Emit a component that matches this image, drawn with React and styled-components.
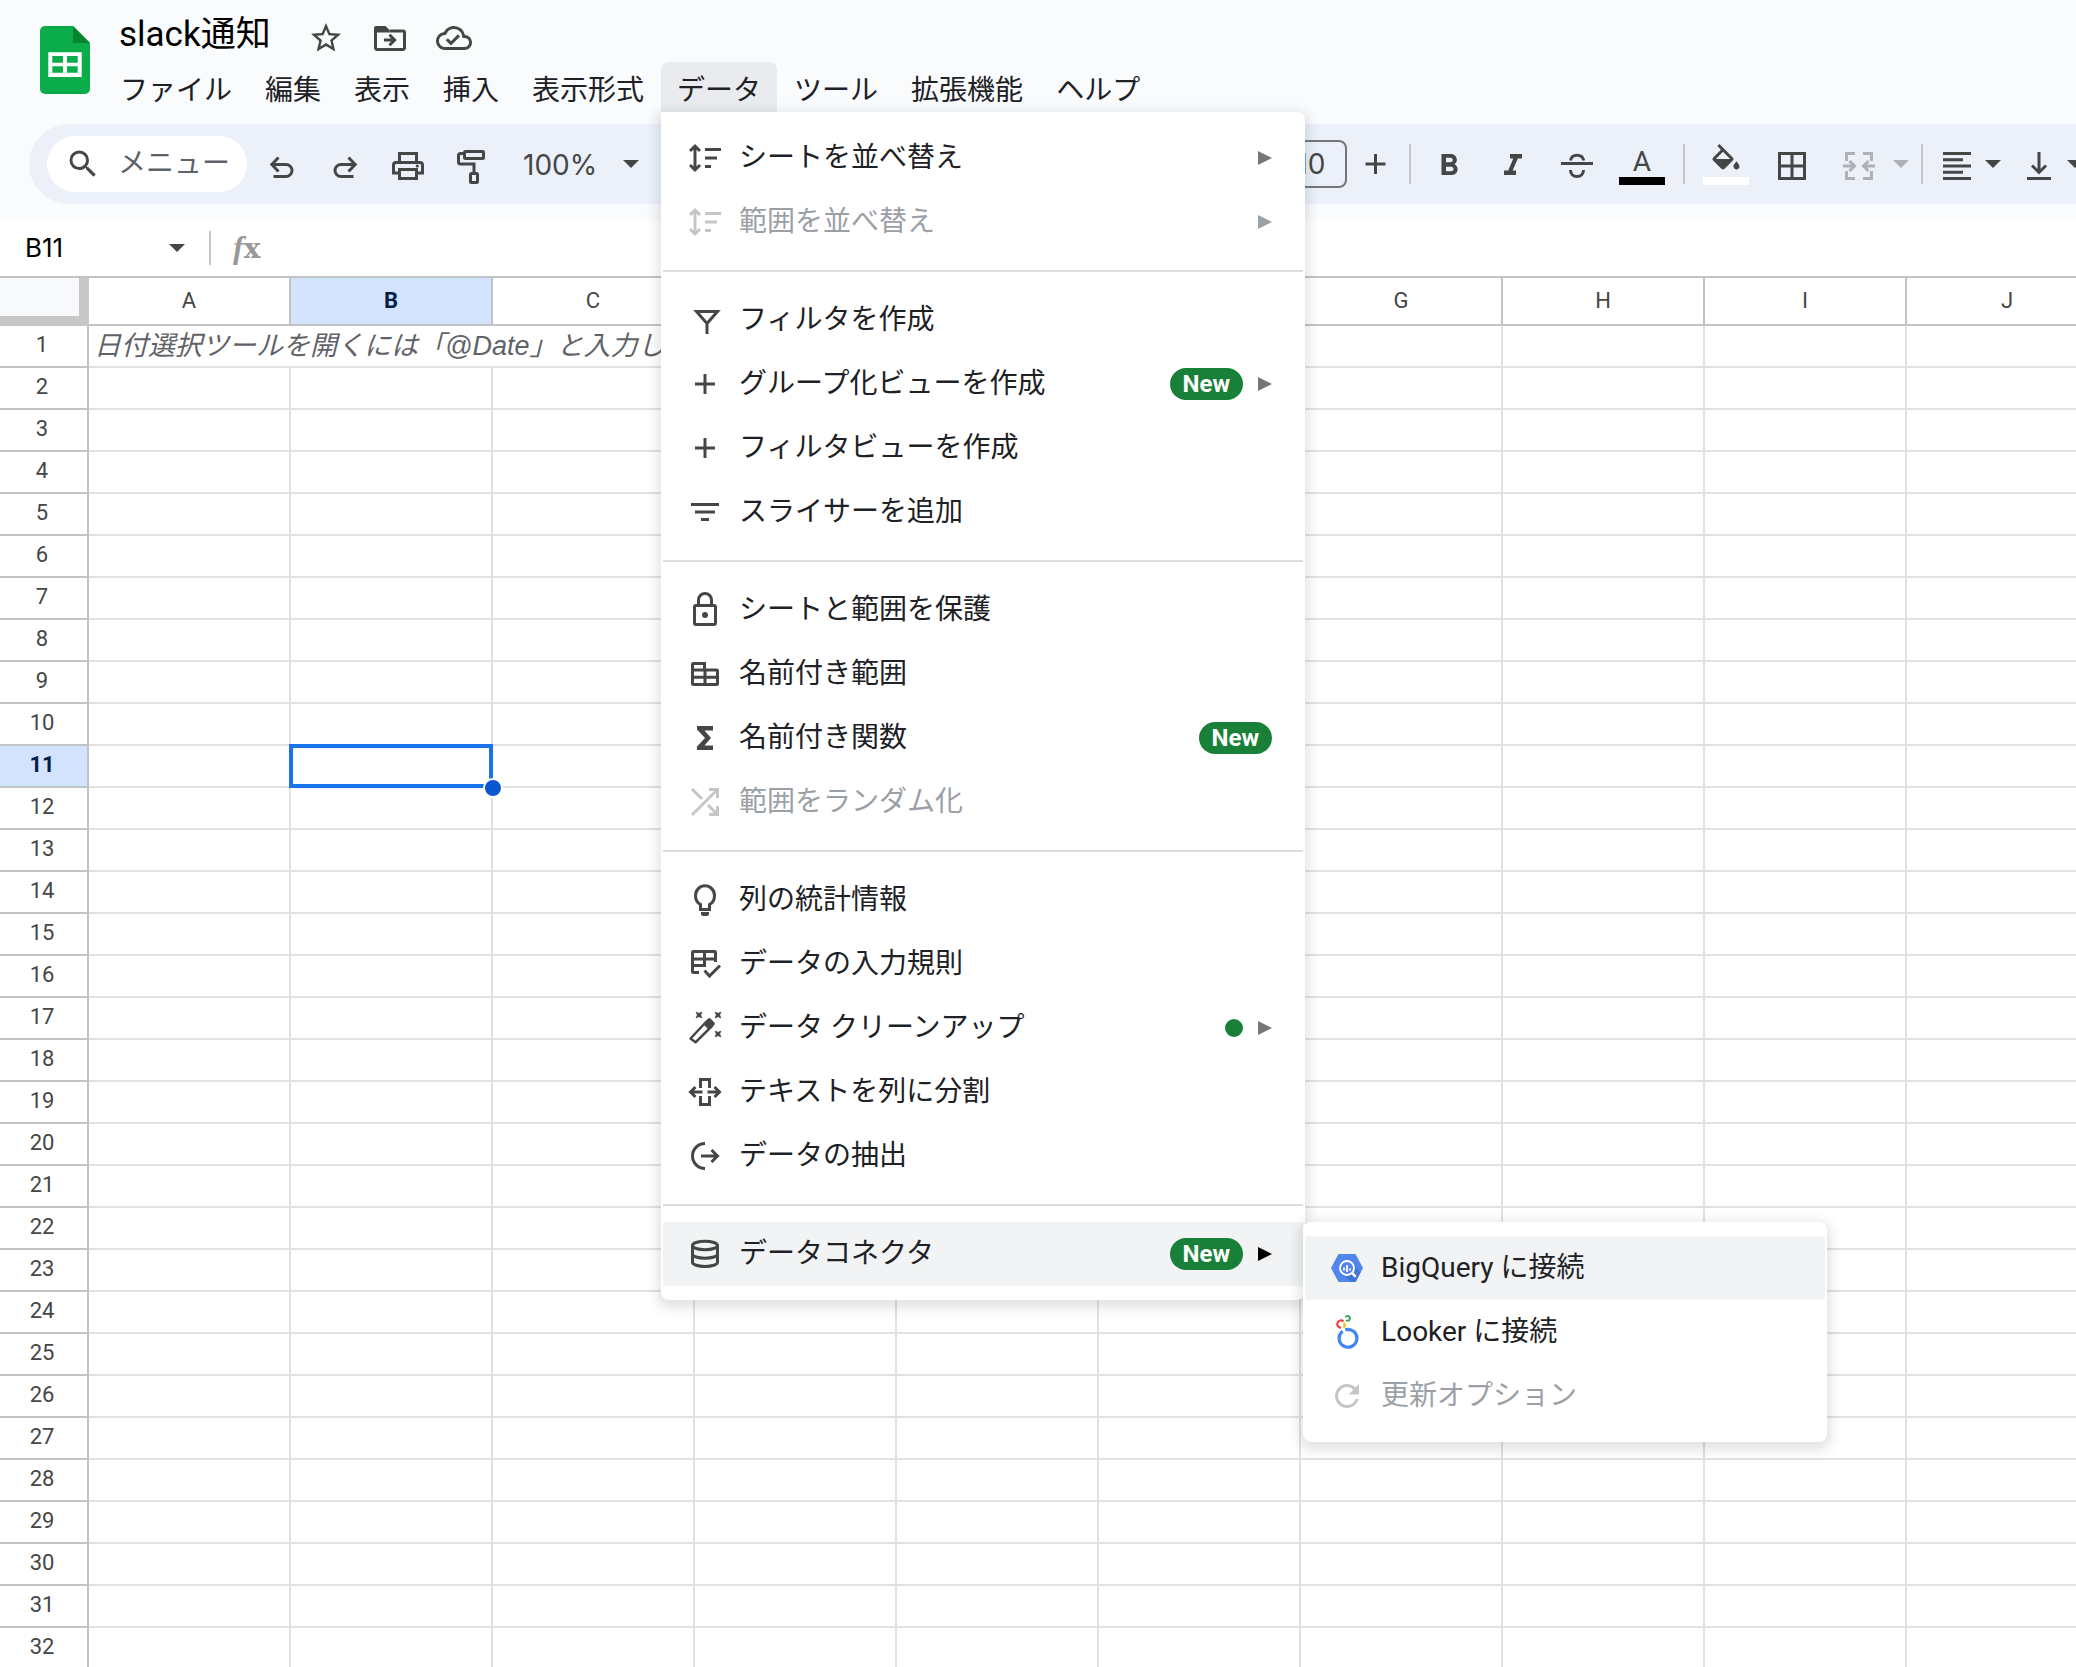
import React from 'react';
import styled, { createGlobalStyle, css } from 'styled-components';
import {
  MdStarBorder,
  MdOutlineCloudDone,
  MdSearch,
  MdFormatBold,
  MdFormatItalic,
  MdRefresh
} from 'react-icons/md';

const colors = {
  text: '#202124',
  icon: '#444746',
  muted: '#5f6368',
  disabled: '#9aa0a6',
  disabledIcon: '#c4c7c5',
  header: '#f9fbfd',
  toolbar: '#ecf1f9',
  hover: '#f1f3f4',
  headerLine: '#c0c4c4',
  gridLine: '#e1e1e1',
  selectedHeader: '#d3e3fd',
  selection: '#1a73e8',
  badge: '#188038'
};

const GlobalStyle = createGlobalStyle`
  * {
    box-sizing: border-box;
  }

  body {
    margin: 0;
    background-color: #fff;
    color: ${colors.text};
    font-family: Roboto, "Noto Sans CJK JP", sans-serif;
  }

  button, input, select {
    margin: 0;
    padding: 0;
    border: none;
    background: none;
    color: inherit;
    font: inherit;
  }
`;

const Page = styled.div`
  display: flex;
  flex-direction: column;
  height: 100vh;
  overflow: hidden;
`;

const Header = styled.header`
  flex: none;
  padding-bottom: 16px;
  background-color: ${colors.header};
`;

const Branding = styled.div`
  display: flex;
  padding-left: 40px;
  margin-bottom: 12px;
`;

const LogoLink = styled.a`
  display: block;
  flex: none;
  width: 50px;
  height: 68px;
  margin: 26px 14px 0 0;
`;

const TitleRow = styled.div`
  display: flex;
  align-items: center;
  gap: 16px;
  height: 62px;
  padding: 14px 0 0 15px;
`;

const Title = styled.h1`
  margin: 0 15px 6px 0;
  color: #000;
  font-size: 35px;
  font-weight: 400;
  line-height: 40px;
`;

const IconButton = styled.button`
  display: flex;
  align-items: center;
  justify-content: center;
  width: 48px;
  height: 48px;
  color: ${colors.icon};
  cursor: pointer;
`;

const MenuBar = styled.nav`
  display: flex;
  gap: 1px;
`;

const MenuBarItem = styled.div`
  position: relative;
`;

const MenuBarButton = styled.button`
  height: 50px;
  padding: 8px 16px 0;
  border-radius: 8px 8px 0 0;
  background-color: ${props => (props.$open ? '#e9ebee' : 'transparent')};
  font-size: 28px;
  line-height: 40px;
  white-space: nowrap;
  cursor: pointer;
`;

const panel = css`
  position: absolute;
  margin: 0;
  padding: 14px 2px;
  list-style: none;
  background-color: #fff;
  box-shadow: 0 4px 12px 4px rgba(60, 64, 67, 0.15);
`;

const Menu = styled.ul`
  ${panel}
  top: 100%;
  left: 0;
  z-index: 10;
  width: 644px;
  border-radius: 0 8px 8px 8px;
`;

const SubMenu = styled.ul`
  ${panel}
  top: 0;
  left: 100%;
  width: 524px;
  border-radius: 8px;
`;

const MenuEntry = styled.li`
  position: relative;
`;

const MenuDivider = styled.li`
  height: 2px;
  margin: 16px 0;
  background-color: #dadce0;
`;

const MenuButton = styled.button`
  display: flex;
  align-items: center;
  width: 100%;
  height: 64px;
  padding: 0 31px 0 24px;
  background-color: ${props => (props.$active ? colors.hover : 'transparent')};
  color: ${props => (props.disabled ? colors.disabled : colors.text)};
  font-size: 28px;
  text-align: left;
  cursor: pointer;

  svg {
    flex: none;
    color: ${props => (props.disabled ? colors.disabledIcon : colors.icon)};
  }
`;

const MenuLabel = styled.span`
  flex: 1;
  padding-left: 16px;
  line-height: 40px;
  white-space: nowrap;
`;

const Badge = styled.span`
  height: 32px;
  padding: 0 13px;
  border-radius: 16px;
  background-color: ${colors.badge};
  color: #fff;
  font-size: 24px;
  font-weight: 700;
  line-height: 32px;
`;

const Dot = styled.span`
  width: 18px;
  height: 18px;
  border-radius: 50%;
  background-color: ${colors.badge};
`;

const SubmenuArrow = styled.span`
  margin-left: 15px;
  border-style: solid;
  border-width: 7px 0 7px 14px;
  border-color: transparent transparent transparent ${props => props.$color};
`;

const Toolbar = styled.div`
  display: flex;
  align-items: center;
  height: 80px;
  margin-left: 29px;
  padding-left: 18px;
  overflow: hidden;
  border-radius: 40px 0 0 40px;
  background-color: ${colors.toolbar};
  color: ${colors.icon};
`;

const ToolGroup = styled.div`
  display: flex;
  flex: none;
  align-items: center;
  gap: 3px;
  min-width: 1228px;
`;

const SearchBox = styled.label`
  display: flex;
  align-items: center;
  gap: 17px;
  width: 200px;
  height: 56px;
  margin-right: 2px;
  padding-left: 18px;
  border-radius: 28px;
  background-color: #fff;

  svg {
    flex: none;
  }
`;

const SearchInput = styled.input`
  width: 116px;
  height: 40px;
  padding-bottom: 2px;
  outline: none;
  font-size: 28px;

  &::placeholder {
    color: ${colors.muted};
    opacity: 1;
  }
`;

const ToolButton = styled.button`
  display: flex;
  flex: none;
  align-items: center;
  justify-content: center;
  width: ${props => props.$width || 60}px;
  height: 48px;
  padding-top: 4px;
  color: ${props => (props.disabled ? '#adb1b6' : 'inherit')};
  cursor: pointer;
`;

const ColorButton = styled(ToolButton)`
  flex-direction: column;
  gap: 3px;
  padding-top: 0;
`;

const ColorGlyph = styled.span`
  display: block;
  height: 30px;
  font-size: 28px;
  line-height: 36px;
`;

const ColorBar = styled.span`
  flex: none;
  width: 46px;
  height: 8px;
  background-color: ${props => props.$color};
`;

const ToolDivider = styled.span`
  flex: none;
  width: 2px;
  height: 40px;
  margin: 0 ${props => props.$space}px;
  background-color: #c7c7c7;
`;

const Caret = styled.span`
  flex: none;
  width: 16px;
  border-style: solid;
  border-width: 8px 8px 0 8px;
  border-color: ${props => props.$color || colors.icon} transparent transparent transparent;
`;

const SplitTool = styled.div`
  display: flex;
  flex: none;
  align-items: center;
  gap: 6px;
  margin-right: ${props => props.$end || 0}px;
  margin-left: ${props => props.$start || 0}px;
`;

const ZoomField = styled.div`
  display: flex;
  align-items: center;
  margin-left: 19px;
`;

const ZoomSelect = styled.select`
  width: 100px;
  height: 48px;
  padding-top: 2px;
  appearance: none;
  font-family: Inter, sans-serif;
  font-size: 28px;
`;

const SizeInput = styled.input`
  flex: none;
  width: 72px;
  height: 48px;
  border: 2px solid #747775;
  border-radius: 8px;
  font-family: Inter, sans-serif;
  font-size: 28px;
  text-align: center;
`;

const FormulaBar = styled.div`
  display: flex;
  flex: none;
  align-items: center;
  height: 56px;
  padding: 0 25px;
`;

const NameBox = styled.input`
  width: 144px;
  height: 40px;
  padding-bottom: 2px;
  outline: none;
  color: #000;
  font-family: Inter, sans-serif;
  font-size: 26px;
`;

const FormulaDivider = styled.span`
  width: 2px;
  height: 34px;
  margin: 0 22px 0 24px;
  background-color: #c7c7c7;
`;

const FormulaLabel = styled.label`
  color: #999;
  font-family: "DejaVu Serif", serif;
  font-size: 28px;
  font-weight: 700;
  line-height: 40px;

  i {
    font-family: "Liberation Serif", serif;
    font-size: 32px;
  }
`;

const FormulaInput = styled.input`
  flex: 1;
  height: 40px;
  margin-left: 20px;
  outline: none;
  font-size: 26px;
`;

const SheetArea = styled.main`
  flex: 1;
  min-height: 0;
  overflow: hidden;
  border-top: 2px solid ${colors.headerLine};
`;

const Sheet = styled.table`
  width: 2109px;
  table-layout: fixed;
  border-collapse: separate;
  border-spacing: 0;
`;

const Corner = styled.td`
  width: 89px;
  height: 48px;
  padding: 0;
  border: solid #c7c7c7;
  border-width: 0 10px 10px 0;
  background-color: #f8f9fa;
`;

const headerCell = css`
  padding: 0;
  border: solid ${colors.headerLine};
  border-width: 0 2px 2px 0;
  background-color: ${props => (props.$selected ? colors.selectedHeader : '#fff')};
  color: ${props => (props.$selected ? '#041e49' : colors.icon)};
  font-size: 22px;
  font-weight: ${props => (props.$selected ? 700 : 400)};
  line-height: 38px;
`;

const ColumnHeader = styled.th`
  ${headerCell}
  width: 202px;
  height: 48px;
`;

const RowHeader = styled.th`
  ${headerCell}
  height: 42px;
  padding: 0 3px 2px 0;
`;

const Cell = styled.td`
  position: relative;
  height: 42px;
  padding: 0;
  border: solid ${colors.gridLine};
  border-width: 0 2px 2px 0;
`;

const HintCell = styled(Cell)`
  overflow: hidden;
  padding-left: 5px;
  color: ${colors.muted};
  font-family: "Liberation Sans", "Noto Sans CJK JP", sans-serif;
  font-size: 27px;
  font-style: italic;
  line-height: 40px;
  white-space: nowrap;
`;

const Selection = styled.div`
  position: absolute;
  inset: -2px;
  z-index: 1;
  border: 4px solid ${colors.selection};
`;

const FillHandle = styled.span`
  position: absolute;
  right: -14px;
  bottom: -14px;
  width: 20px;
  height: 20px;
  border: 2px solid #fff;
  border-radius: 50%;
  background-color: #0b57d0;
`;

const Glyph = ({ children, width = 3 }) => (
  <svg
    width="36"
    height="36"
    viewBox="0 0 36 36"
    fill="none"
    stroke="currentColor"
    strokeWidth={width}
    overflow="visible"
    aria-hidden="true"
  >
    {children}
  </svg>
);

const SheetsLogo = () => (
  <svg width="50" height="68" viewBox="0 0 50 68" aria-hidden="true">
    <path d="M5 0H33L50 17V63a5 5 0 0 1-5 5H5a5 5 0 0 1-5-5V5a5 5 0 0 1 5-5z" fill="#0aad4a" />
    <path d="M33 0L50 17H33z" fill="#05842f" />
    <path
      d="M8.3 26.3H41.7V51H8.3zM12.3 30V36.7H23V30zM27 30V36.7H37.7V30zM12.3 40.3V46.7H23V40.3zM27 40.3V46.7H37.7V40.3z"
      fill="#fff"
      fillRule="evenodd"
    />
  </svg>
);

const FolderMoveIcon = () => (
  <Glyph>
    <path d="M3.5 8V28a1.5 1.5 0 0 0 1.5 1.5H31a1.5 1.5 0 0 0 1.5-1.5V12.5a1.5 1.5 0 0 0-1.5-1.5H17.5" />
    <path d="M4 6H13.5L17.5 10V12.5H2V8a2 2 0 0 1 2-2z" fill="currentColor" stroke="none" />
    <path d="M12 20H22M17.5 14.8L22.7 20L17.5 25.2" />
  </Glyph>
);

const UndoIcon = () => (
  <Glyph>
    <path d="M9.5 28.5H22a6 6 0 0 0 0-12H8M14.5 9.5L7.8 16.5L14.5 23.5" />
  </Glyph>
);

const RedoIcon = () => (
  <Glyph>
    <path d="M26.5 28.5H14a6 6 0 0 1 0-12H28M21.5 9.5L28.2 16.5L21.5 23.5" />
  </Glyph>
);

const PrintIcon = () => (
  <Glyph>
    <path d="M9.5 14.5V5.5H26.5V14.5M9 25H3.5V17a2.5 2.5 0 0 1 2.5-2.5H30a2.5 2.5 0 0 1 2.5 2.5V25H27M9.5 21.5H26.5V30.5H9.5z" />
    <circle cx="27.3" cy="18" r="1.6" fill="currentColor" stroke="none" />
  </Glyph>
);

const PaintRollerIcon = () => (
  <Glyph>
    <rect x="11.5" y="3.5" width="19" height="7" rx="1" />
    <path d="M11 5.5H7.500a2 2 0 0 0-2 2V14a2 2 0 0 0 2 2H21V25" />
    <rect x="17.5" y="25.5" width="7" height="9" rx="1" />
  </Glyph>
);

const ToolPlusIcon = () => (
  <Glyph>
    <path d="M18.5 6V26M8.5 16H28.5" />
  </Glyph>
);

const StrikeIcon = () => (
  <Glyph>
    <path d="M2 15.5H34M11.5 12.5C12 9 14.5 7.2 18 7.2S24 9 24.8 12.5M11.5 22C11.5 26 14 28.5 18 28.5S24.5 26 24.5 22" />
  </Glyph>
);

const FillIcon = () => (
  <svg width="36" height="30" viewBox="0 0 24 20" fill="currentColor" aria-hidden="true">
    <path d="M16.56 8.94L7.62 0 6.21 1.41l2.38 2.38-5.15 5.15c-.59.59-.59 1.54 0 2.12l5.5 5.5c.29.29.68.44 1.06.44s.77-.15 1.06-.44l5.5-5.5c.59-.58.59-1.53 0-2.12zM5.21 10L10 5.21 14.79 10H5.21zM19 11.5s-2 2.17-2 3.5c0 1.1.9 2 2 2s2-.9 2-2c0-1.33-2-3.5-2-3.5z" />
  </svg>
);

const BordersIcon = () => (
  <Glyph>
    <path d="M5.5 5.5H30.5V30.5H5.5zM18 5.5V30.5M5.5 18H30.5" />
  </Glyph>
);

const MergeIcon = () => (
  <Glyph>
    <path d="M14 5.5H5.5V13M22 5.5H30.5V13M14 30.5H5.5V23M22 30.5H30.5V23" />
    <path d="M2 18H13M8.5 13L13.5 18L8.5 23M34 18H23M27.5 13L22.5 18L27.5 23" />
  </Glyph>
);

const AlignLeftIcon = () => (
  <Glyph>
    <path d="M4 5.5H32M4 11.7H24M4 18H32M4 24.3H24M4 30.5H32" />
  </Glyph>
);

const AlignBottomIcon = () => (
  <Glyph>
    <path d="M6 30.5H30M18 4V24M11 17.5L18 24.5L25 17.5" />
  </Glyph>
);

const SortIcon = () => (
  <Glyph>
    <path d="M8 6V30M3 11L8 6L13 11M3 25L8 30L13 25M18 9.5H34M18 18H30M18 26.5H24" />
  </Glyph>
);

const FilterIcon = () => (
  <Glyph>
    <path d="M9.5 9.5H30.5L20 21.5zM20 20V32" />
  </Glyph>
);

const PlusIcon = () => (
  <Glyph>
    <path d="M18 8V28M8 18H28" />
  </Glyph>
);

const SlicerIcon = () => (
  <Glyph>
    <path d="M4 10.5H32M8 18H28M14 25.5H22" />
  </Glyph>
);

const LockIcon = () => (
  <Glyph>
    <rect x="7.5" y="13.5" width="21" height="19" rx="1.5" />
    <path d="M11.5 13V8a6.5 6.5 0 0 1 13 0V13" />
    <circle cx="18" cy="23" r="3" fill="currentColor" stroke="none" />
  </Glyph>
);

const NamedRangeIcon = () => (
  <Glyph>
    <path d="M5.5 8.5a1 1 0 0 1 1-1H17.5V14H29.5a1 1 0 0 1 1 1V27.5a1 1 0 0 1-1 1H6.5a1 1 0 0 1-1-1zM18 14V28M5.5 14H18M5.5 21.3H30.5" />
  </Glyph>
);

const SigmaIcon = () => (
  <Glyph>
    <path
      d="M10 6H26V10.5H17.5L24 18L17.5 25.5H26V30H10V26.5L18 18L10 9.5z"
      fill="currentColor"
      stroke="none"
    />
  </Glyph>
);

const ShuffleIcon = () => (
  <Glyph>
    <path d="M5 31L30 6M22 5.5H30.5V14M5 5L15 15M21 21L30 30M30.5 22V30.5H22" />
  </Glyph>
);

const BulbIcon = () => (
  <Glyph>
    <path d="M13.5 27.5V22.5C10.5 21 8.5 17.5 8.5 13.5a9.5 9.7 0 0 1 19 0C27.5 17.5 25.5 21 22.5 22.5V27.5z" />
    <path d="M14 30H22V31.5a2.5 2.5 0 0 1-2.5 2.5H16.5a2.5 2.5 0 0 1-2.5-2.5z" fill="currentColor" stroke="none" />
  </Glyph>
);

const ValidationIcon = () => (
  <Glyph>
    <path d="M12 26.5H6.5a1 1 0 0 1-1-1V6.5a1 1 0 0 1 1-1H27.5a1 1 0 0 1 1 1V16M5.5 13H28.5M17.5 5.5V19.5M5.5 19.5H19M17.5 24.5L22.5 30L33 19.5" />
  </Glyph>
);

const WandIcon = () => (
  <Glyph width={2.5}>
    <path d="M3.5 28.5L19.5 11.5L25 16L8.5 32.3z" strokeLinejoin="round" />
    <path d="M16 14L21 8.6a1.8 1.8 0 0 1 2.5 0L27.3 12.5a1.8 1.8 0 0 1 0 2.5L22 20z" fill="currentColor" stroke="none" />
    <path
      d="M9 2l3 1.3L15 2l-1.3 3L15 8l-3-1.3L9 8l1.3-3zM28 2l3 1.3L34 2l-1.3 3L34 8l-3-1.3L28 8l1.3-3zM28 21l3 1.3L34 21l-1.3 3L34 27l-3-1.3L28 27l1.3-3z"
      fill="currentColor"
      strokeWidth="0.6"
    />
  </Glyph>
);

const SplitIcon = () => (
  <Glyph>
    <path d="M13.5 14V5.5H22.5V14M13.5 22V30.5H22.5V22M15.5 18H4M8.5 13L3.5 18L8.5 23M20.5 18H32M27.5 13L32.5 18L27.5 23" />
  </Glyph>
);

const ExtractIcon = () => (
  <Glyph>
    <path d="M18 5.5A12.5 12.5 0 0 0 18 30.5M14 18H30M24.5 12L30.5 18L24.5 24" />
  </Glyph>
);

const DatabaseIcon = () => (
  <Glyph>
    <ellipse cx="18" cy="9.5" rx="12.5" ry="4.2" />
    <path d="M5.5 9.5V26.3C5.5 28.6 11 30.5 18 30.5S30.5 28.6 30.5 26.3V9.5M5.5 18C5.5 20.3 11 22.2 18 22.2S30.5 20.3 30.5 18" />
  </Glyph>
);

const BigQueryIcon = () => (
  <svg width="36" height="36" viewBox="0 0 36 36" aria-hidden="true">
    <path d="M9.5 4H26.5L34 18L26.5 32H9.5L2 18z" fill="#5285ec" />
    <path d="M23 12.5L31.5 22.5L26.5 32H22L13 23z" fill="#4274d8" />
    <circle cx="18" cy="18" r="7" fill="#5285ec" stroke="#fff" strokeWidth="1.8" />
    <path d="M23.2 23.2L26 26" stroke="#fff" strokeWidth="2.6" strokeLinecap="round" />
    <path d="M15 17.5V20.5M18 15V22M21 18.5V20.5" stroke="#fff" strokeWidth="1.8" />
  </svg>
);

const LookerIcon = () => (
  <svg width="36" height="36" viewBox="0 0 36 36" fill="none" aria-hidden="true">
    <path d="M13.6 17.2A8.9 8.9 0 1 0 16.6 15.7" stroke="#4285f4" strokeWidth="3.2" />
    <path d="M16.4 15.7Q17.2 15.5 18 15.5" stroke="#4285f4" strokeWidth="3.2" />
    <path d="M14.5 7.5A3.6 3.6 0 1 0 12 13.6" stroke="#ea4335" strokeWidth="2.2" />
    <path d="M15 8.8Q16.4 11 14.8 13.6" stroke="#fbbc04" strokeWidth="2.2" />
    <path d="M16.5 3.2A2.4 2.4 0 1 1 17 6.2" stroke="#34a853" strokeWidth="1.9" />
  </svg>
);

const RefreshIcon = () => <MdRefresh size={36} />;

const barItems = ['ファイル', '編集', '表示', '挿入', '表示形式', 'データ', 'ツール', '拡張機能', 'ヘルプ'];

const dataMenu = [
  [
    { icon: SortIcon, label: 'シートを並べ替え', arrow: true },
    { icon: SortIcon, label: '範囲を並べ替え', arrow: true, disabled: true }
  ],
  [
    { icon: FilterIcon, label: 'フィルタを作成' },
    { icon: PlusIcon, label: 'グループ化ビューを作成', badge: true, arrow: true },
    { icon: PlusIcon, label: 'フィルタビューを作成' },
    { icon: SlicerIcon, label: 'スライサーを追加' }
  ],
  [
    { icon: LockIcon, label: 'シートと範囲を保護' },
    { icon: NamedRangeIcon, label: '名前付き範囲' },
    { icon: SigmaIcon, label: '名前付き関数', badge: true },
    { icon: ShuffleIcon, label: '範囲をランダム化', disabled: true }
  ],
  [
    { icon: BulbIcon, label: '列の統計情報' },
    { icon: ValidationIcon, label: 'データの入力規則' },
    { icon: WandIcon, label: 'データ クリーンアップ', dot: true, arrow: true },
    { icon: SplitIcon, label: 'テキストを列に分割' },
    { icon: ExtractIcon, label: 'データの抽出' }
  ],
  [
    {
      icon: DatabaseIcon,
      label: 'データコネクタ',
      badge: true,
      arrow: true,
      active: true,
      children: [
        { icon: BigQueryIcon, label: 'BigQuery に接続', active: true },
        { icon: LookerIcon, label: 'Looker に接続' },
        { icon: RefreshIcon, label: '更新オプション', disabled: true }
      ]
    }
  ]
];

const columns = ['A', 'B', 'C', 'D', 'E', 'F', 'G', 'H', 'I', 'J'];
const rows = Array.from({ length: 32 }, (_, index) => index + 1);
const selected = { column: 'B', row: 11 };

const getArrowColor = (item) => {
  if (item.active) return '#000';
  return item.disabled ? colors.disabled : '#777';
};

const MenuItem = ({ item }) => (
  <MenuEntry role="none">
    <MenuButton role="menuitem" disabled={item.disabled} $active={item.active}>
      <item.icon />
      <MenuLabel>{item.label}</MenuLabel>
      {item.badge && <Badge>New</Badge>}
      {item.dot && <Dot />}
      {item.arrow && <SubmenuArrow $color={getArrowColor(item)} />}
    </MenuButton>
    {item.children && (
      <SubMenu role="menu">
        {item.children.map(child => (
          <MenuItem key={child.label} item={child} />
        ))}
      </SubMenu>
    )}
  </MenuEntry>
);

const DataMenu = () => (
  <Menu role="menu">
    {dataMenu.map((section, index) => (
      <React.Fragment key={section[0].label}>
        {index > 0 && <MenuDivider role="separator" />}
        {section.map(item => (
          <MenuItem key={item.label} item={item} />
        ))}
      </React.Fragment>
    ))}
  </Menu>
);

const SheetToolbar = () => (
  <Toolbar role="toolbar">
    <ToolGroup>
      <SearchBox>
        <MdSearch size={36} />
        <SearchInput type="text" placeholder="メニュー" aria-label="メニュー" />
      </SearchBox>
      <ToolButton aria-label="元に戻す"><UndoIcon /></ToolButton>
      <ToolButton aria-label="やり直し"><RedoIcon /></ToolButton>
      <ToolButton aria-label="印刷"><PrintIcon /></ToolButton>
      <ToolButton aria-label="書式を貼り付け"><PaintRollerIcon /></ToolButton>
      <ZoomField>
        <ZoomSelect aria-label="ズーム" defaultValue="100">
          <option value="100">100%</option>
        </ZoomSelect>
        <Caret />
      </ZoomField>
    </ToolGroup>
    <SizeInput type="text" defaultValue="10" aria-label="フォントサイズ" />
    <ToolButton $width={56} aria-label="フォントサイズを拡大"><ToolPlusIcon /></ToolButton>
    <ToolDivider $space={6} />
    <ToolButton $width={64} aria-label="太字"><MdFormatBold size={36} /></ToolButton>
    <ToolButton $width={64} aria-label="斜体"><MdFormatItalic size={36} /></ToolButton>
    <ToolButton $width={64} aria-label="取り消し線"><StrikeIcon /></ToolButton>
    <ColorButton $width={66} aria-label="テキストの色">
      <ColorGlyph>A</ColorGlyph>
      <ColorBar $color="#000" />
    </ColorButton>
    <ToolDivider $space={8} />
    <ColorButton $width={66} aria-label="塗りつぶしの色">
      <FillIcon />
      <ColorBar $color="#fff" />
    </ColorButton>
    <ToolButton $width={66} aria-label="枠線"><BordersIcon /></ToolButton>
    <SplitTool $start={6}>
      <ToolButton $width={56} disabled aria-label="セルを結合"><MergeIcon /></ToolButton>
      <Caret $color="#adb1b6" />
    </SplitTool>
    <ToolDivider $space={12} />
    <SplitTool $end={16}>
      <ToolButton $width={44} aria-label="水平方向の配置"><AlignLeftIcon /></ToolButton>
      <Caret />
    </SplitTool>
    <SplitTool>
      <ToolButton $width={44} aria-label="垂直方向の配置"><AlignBottomIcon /></ToolButton>
      <Caret />
    </SplitTool>
  </Toolbar>
);

const SheetRow = ({ row }) => {
  // the hint in A1 runs over the next empty cells
  const rowColumns = row === 1 ? columns.slice(4) : columns;

  return (
    <tr>
      <RowHeader scope="row" $selected={row === selected.row}>{row}</RowHeader>
      {row === 1 && (
        <HintCell colSpan={4}>日付選択ツールを開くには「@Date」と入力します</HintCell>
      )}
      {rowColumns.map(column => (
        <Cell key={column}>
          {row === selected.row && column === selected.column && (
            <Selection>
              <FillHandle />
            </Selection>
          )}
        </Cell>
      ))}
    </tr>
  );
};

const App = () => (
  <Page>
    <GlobalStyle />
    <Header>
      <Branding>
        <LogoLink href="#" aria-label="スプレッドシート ホーム">
          <SheetsLogo />
        </LogoLink>
        <div>
          <TitleRow>
            <Title>slack通知</Title>
            <IconButton aria-label="スターを付ける"><MdStarBorder size={36} /></IconButton>
            <IconButton aria-label="移動"><FolderMoveIcon /></IconButton>
            <IconButton aria-label="保存状況"><MdOutlineCloudDone size={36} /></IconButton>
          </TitleRow>
          <MenuBar>
            {barItems.map(label => (
              <MenuBarItem key={label}>
                <MenuBarButton $open={label === 'データ'}>{label}</MenuBarButton>
                {label === 'データ' && <DataMenu />}
              </MenuBarItem>
            ))}
          </MenuBar>
        </div>
      </Branding>
      <SheetToolbar />
    </Header>
    <FormulaBar>
      <NameBox type="text" defaultValue="B11" aria-label="名前ボックス" />
      <Caret />
      <FormulaDivider />
      <FormulaLabel htmlFor="formula"><i>f</i>x</FormulaLabel>
      <FormulaInput id="formula" type="text" />
    </FormulaBar>
    <SheetArea>
      <Sheet>
        <thead>
          <tr>
            <Corner />
            {columns.map(column => (
              <ColumnHeader key={column} scope="col" $selected={column === selected.column}>
                {column}
              </ColumnHeader>
            ))}
          </tr>
        </thead>
        <tbody>
          {rows.map(row => (
            <SheetRow key={row} row={row} />
          ))}
        </tbody>
      </Sheet>
    </SheetArea>
  </Page>
);

export default App;
